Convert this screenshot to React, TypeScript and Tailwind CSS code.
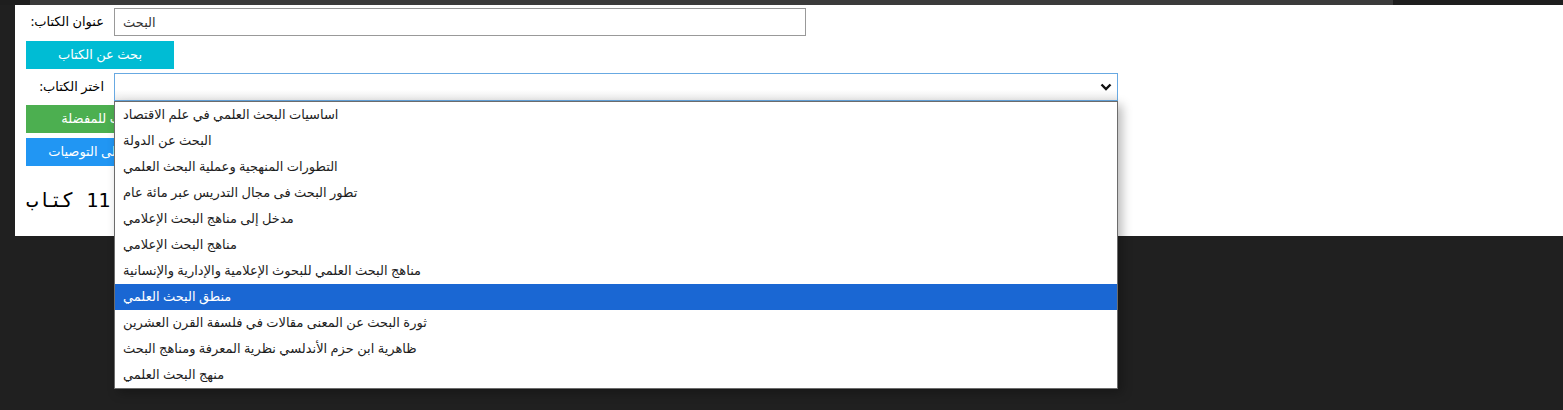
import { useState } from 'react';

const books = [
    'اساسيات البحث العلمي في علم الاقتصاد',
    'البحث عن الدولة',
    'التطورات المنهجية وعملية البحث العلمي',
    'تطور البحث فى مجال التدريس عبر مائة عام',
    'مدخل إلى مناهج البحث الإعلامي',
    'مناهج البحث الإعلامي',
    'مناهج البحث العلمي للبحوث الإعلامية والإدارية والإنسانية',
    'منطق البحث العلمي',
    'ثورة البحث عن المعنى مقالات في فلسفة القرن العشرين',
    'ظاهرية ابن حزم الأندلسي نظرية المعرفة ومناهج البحث',
    'منهج البحث العلمي',
];

export default function App() {
    const [query, setQuery] = useState('البحث');
    const selected = 7;

    return (
        <div className="min-h-[410px] bg-[#202020] font-['Noto_Sans','DejaVu_Sans',sans-serif] text-[13px] text-black">
            <div className="h-[5px] bg-[#1e1e1e] pl-[30px]">
                <div className="h-full w-[1363px] bg-[#3b3b3b]" />
            </div>

            <div className="ml-[15px] flex h-[231px] flex-col bg-white pl-[11px] pt-[3px]">
                <div className="flex h-[28px] items-center">
                    <label className="w-[79px] pr-px text-right">
                        {':'}
                        {'عنوان الكتاب'}
                    </label>
                    <input
                        className="ml-[9px] h-[28px] w-[692px] border border-[#999] px-2 text-[13px] text-[#333] outline-none"
                        value={query}
                        onChange={(e) => setQuery(e.target.value)}
                    />
                </div>

                <button className="mt-[5px] h-[28px] w-[148px] bg-[#00bcd4] text-[13px] text-white">بحث عن الكتاب</button>

                <div className="relative z-10 mt-[4px] flex h-[28px] items-center">
                    <label className="w-[79px] pr-px text-right">
                        {':'}
                        {'اختر الكتاب'}
                    </label>
                    <div className="relative ml-[9px] h-[28px] w-[1004px]">
                        <div className="flex h-full items-center justify-end border border-[#68a9e2] bg-gradient-to-b from-white from-60% to-[#ececec] pr-[5px]">
                            <svg width="12" height="8" viewBox="0 0 12 8">
                                <path d="M1.5 1.5 L6 6 L10.5 1.5" fill="none" stroke="#111" strokeWidth="2.4" />
                            </svg>
                        </div>
                        <ul className="absolute left-0 top-[28px] w-[1004px] border border-[#6c6c6c] bg-white shadow-[4px_4px_10px_rgba(0,0,0,0.28)]">
                            {books.map((b, i) => (
                                <li
                                    key={b}
                                    className={
                                        i === selected
                                            ? 'flex h-[26px] items-center bg-[#1a67d3] pl-[8px] text-white'
                                            : 'flex h-[26px] items-center pl-[8px] text-[#1d1d1d]'
                                    }
                                >
                                    {b}
                                </li>
                            ))}
                        </ul>
                    </div>
                </div>

                <button className="mt-[4px] h-[28px] w-[148px] bg-[#4caf50] text-[13px] text-white">اذهب للمفضلة</button>
                <button className="mt-[5px] h-[28px] w-[148px] bg-[#2196f3] text-[13px] text-white">اذهب إلى التوصيات</button>

                <div dir="rtl" className="mt-[19px] text-left font-['DejaVu_Sans_Mono',monospace] text-[20px] leading-[30px]">
                    11 كتاب
                </div>
            </div>
        </div>
    );
}
